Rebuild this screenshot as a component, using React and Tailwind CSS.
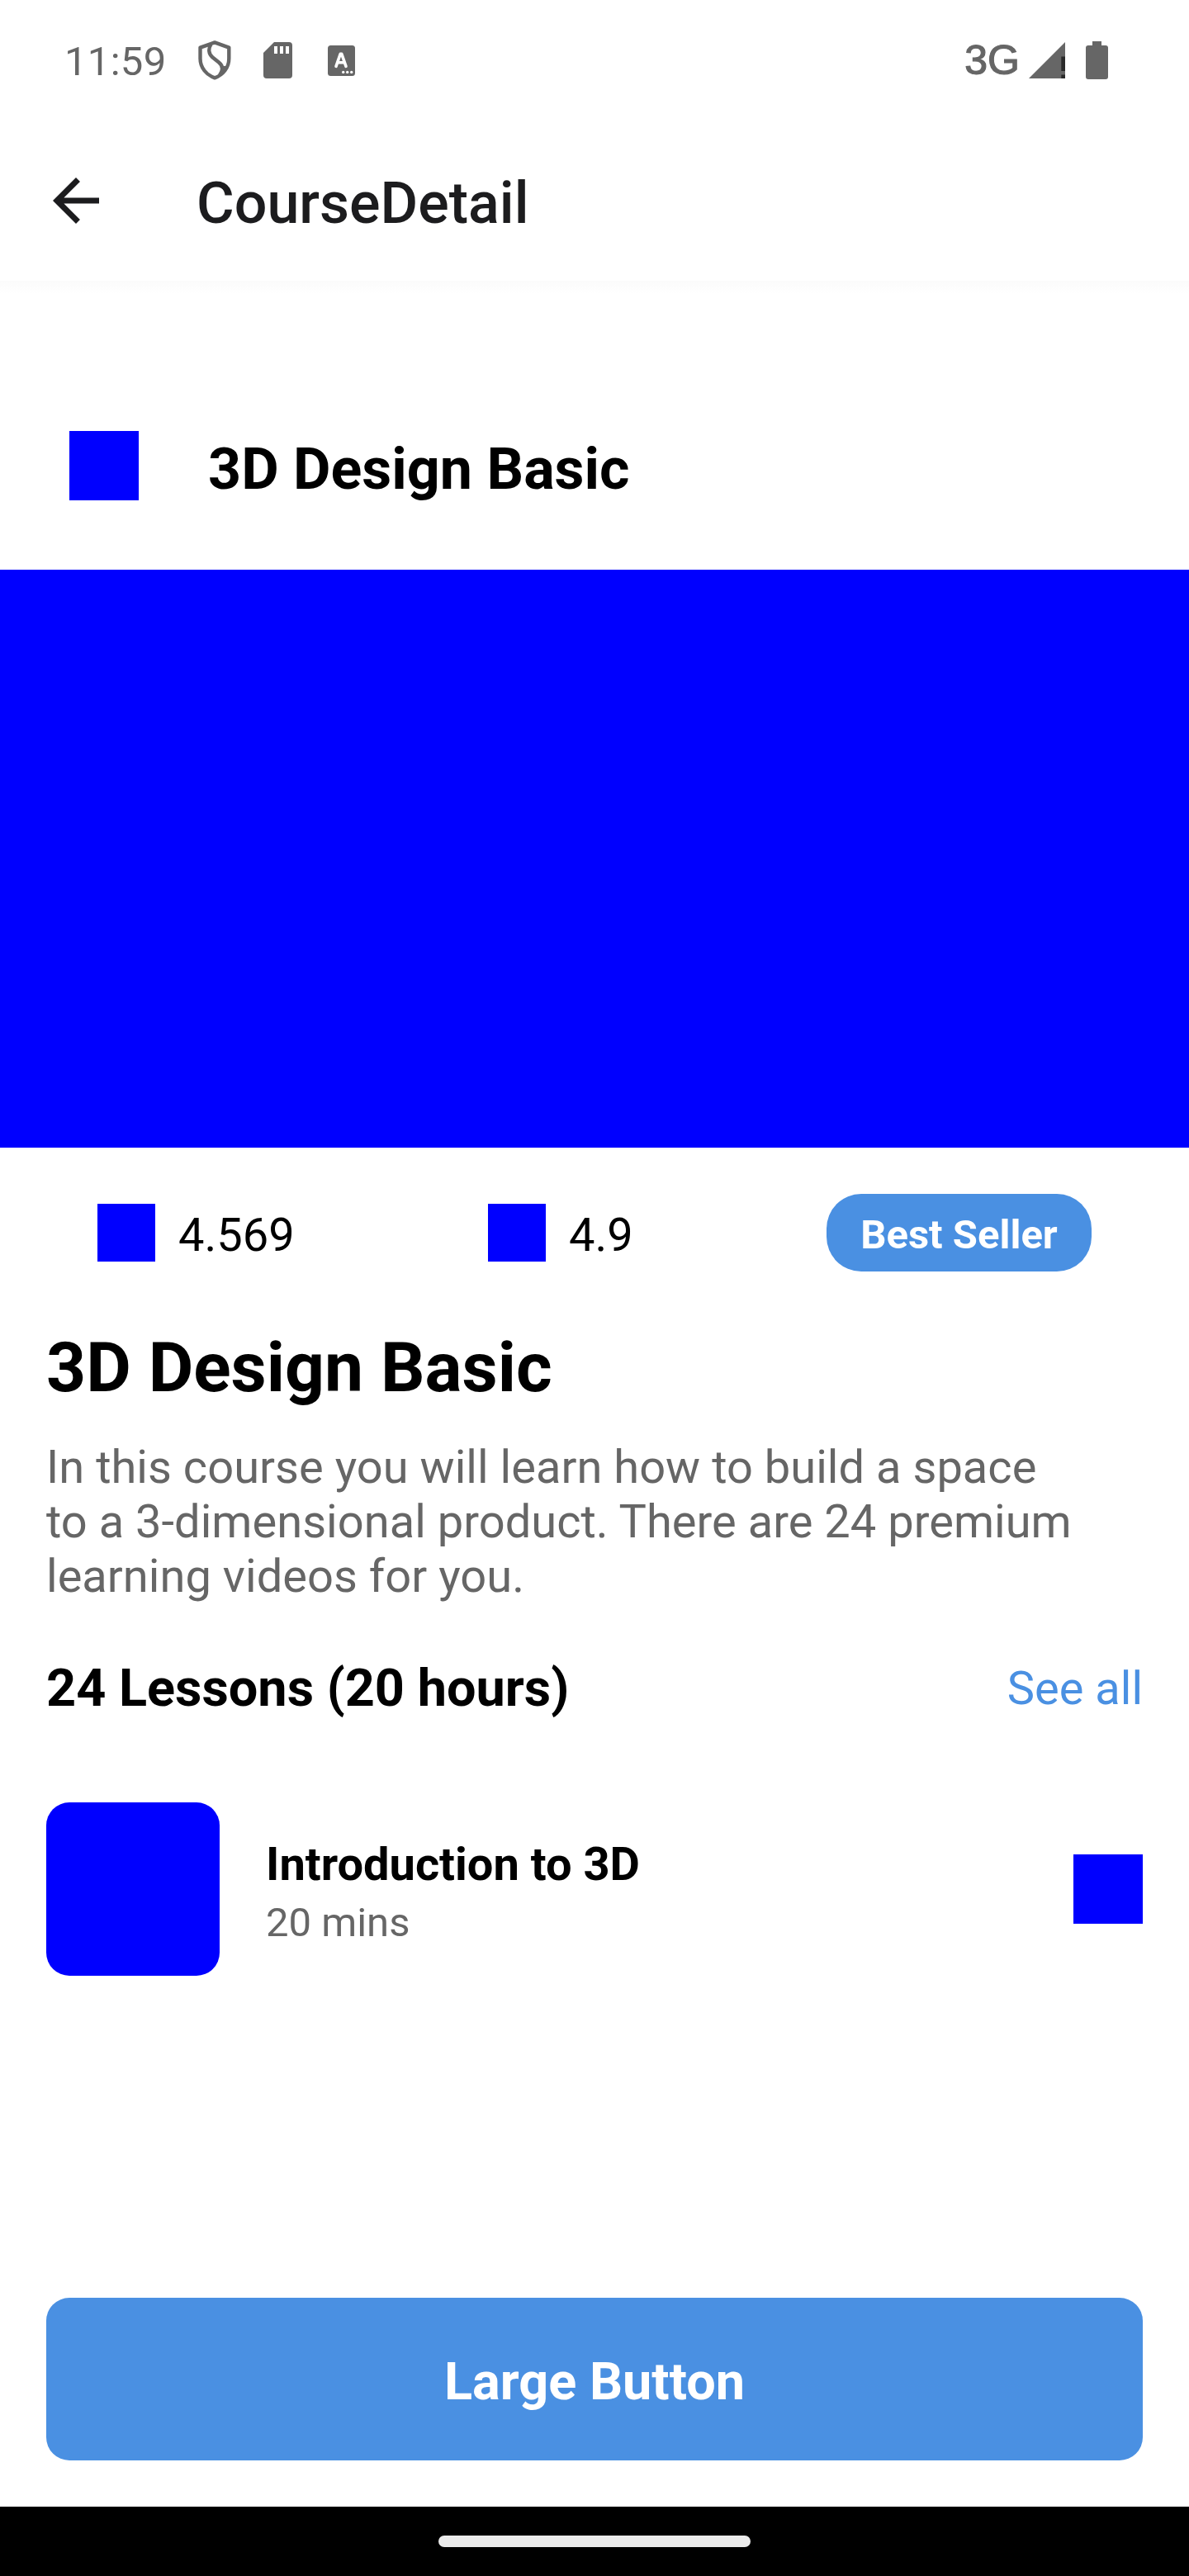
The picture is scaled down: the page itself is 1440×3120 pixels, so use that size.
function ShieldIcon() {
  return (
    <svg className="h-[48px] w-[40px]" viewBox="0 0 40 48" fill="none" stroke="#666666" strokeWidth="4.4" strokeLinejoin="round">
      <path d="M20 2.4 L37.3 8.6 V22 C37.3 33 30 41.8 20 45.4 C10 41.8 2.5 33 2.5 22 V8.6 Z" />
      <path d="M15.5 4.5 C12 10 12.5 16.5 17.5 20.5 L25 26.5 C30.5 31 30.5 36 26 42" />
      <path d="M34 31 L29 40 L26 42 L29 31 Z" fill="#666666" stroke="none" />
    </svg>
  );
}

function SdCardIcon() {
  return (
    <svg className="h-[44px] w-[35px]" viewBox="0 0 35 44">
      <path fill="#666666" d="M13 0 H31 a4 4 0 0 1 4 4 V40 a4 4 0 0 1-4 4 H4 a4 4 0 0 1-4-4 V13 Z" />
      <path fill="#ffffff" d="M13 5 h4 v9 h-4z M20 5 h4 v9 h-4z M27 5 h4 v9 h-4z" />
    </svg>
  );
}

function KeyboardBadge() {
  return (
    <svg className="h-[37px] w-[33px]" viewBox="0 0 33 37">
      <rect width="33" height="37" rx="3.5" fill="#666666" />
      <path d="M10 25.3 L15.2 10.3 H16.8 L22 25.3 M12 20.8 H20" fill="none" stroke="#ffffff" strokeWidth="3.6" strokeLinecap="round" strokeLinejoin="round" />
      <g fill="#ffffff">
        <circle cx="18.7" cy="32.4" r="1.7" />
        <circle cx="23.7" cy="32.4" r="1.7" />
        <circle cx="28.7" cy="32.4" r="1.7" />
      </g>
    </svg>
  );
}

function SignalIcon() {
  return (
    <svg className="h-[44px] w-[44px]" viewBox="0 0 44 44">
      <path fill="#666666" d="M44 0 V44 H0 Z" />
      <path fill="#2a2a2a" d="M39.3 17.5 H44 V35 H39.3 Z M39.3 39.5 H44 V44 H39.3 Z" />
    </svg>
  );
}

function BatteryIcon() {
  return (
    <svg className="h-[46px] w-[27px]" viewBox="0 0 27 46" fill="#666666">
      <rect x="8" width="11" height="8" />
      <rect y="5" width="27" height="41" rx="3" />
    </svg>
  );
}

function StatusBar() {
  return (
    <div className="flex h-[146px] items-center pr-[98px] pl-[78px] text-[#666666]">
      <span className="mt-[3px] w-[162px] text-[49px] leading-[60px] tracking-[0.3px]">11:59</span>
      <ShieldIcon />
      <div className="ml-[39px]"><SdCardIcon /></div>
      <div className="ml-[43px]"><KeyboardBadge /></div>
      <div className="ml-auto flex items-center">
        <span className="font-['Liberation_Sans',sans-serif] text-[50px] leading-[60px] [-webkit-text-stroke:1.2px_#666666]">3G</span>
        <div className="ml-[11px]"><SignalIcon /></div>
        <div className="-mt-[1px] ml-[25px]"><BatteryIcon /></div>
      </div>
    </div>
  );
}

function Header() {
  return (
    <header className="flex h-[194px] items-center pl-[50px] text-[#1c1c1e]">
      <svg className="h-[84px] w-[84px]" viewBox="0 0 24 24" fill="currentColor">
        <path d="M20 11H7.83l5.59-5.59L12 4l-8 8 8 8 1.41-1.41L7.83 13H20v-2z" />
      </svg>
      <h1 className="mt-[6px] ml-[104px] text-[70px] leading-[82px] font-medium">CourseDetail</h1>
    </header>
  );
}

function Stat({ value }) {
  return (
    <div className="flex items-center gap-[28px]">
      <div className="size-[70px] bg-[#0000ff]" />
      <span className="mt-[6px] text-[56px] leading-[66px]">{value}</span>
    </div>
  );
}

export default function App() {
  return (
    <div className="flex h-[3120px] w-[1440px] flex-col overflow-hidden bg-white font-[Roboto,sans-serif] text-black">
      <StatusBar />
      <Header />
      <div className="h-[16px] bg-linear-to-b from-[#fbfbfb] to-white" />
      <main className="flex flex-1 flex-col">
        <div className="mt-[124px] flex items-center gap-[84px] px-[84px] py-[42px]">
          <div className="size-[84px] bg-[#0000ff]" />
          <h2 className="mt-[4px] -mb-[4px] text-[70px] leading-[82px] font-bold">3D Design Basic</h2>
        </div>
        <div className="mt-[42px] h-[700px] shrink-0 bg-[#0000ff]" />
        <div className="mt-[56px] flex h-[94px] items-center pl-[118px]">
          <div className="w-[473px]"><Stat value="4.569" /></div>
          <div className="w-[410px]"><Stat value="4.9" /></div>
          <div className="flex h-[94px] w-[321px] items-center justify-center rounded-[42px] bg-[#4a90e2]">
            <span className="mt-[5px] text-[49px] leading-[58px] font-bold text-white">Best Seller</span>
          </div>
        </div>
        <section className="flex flex-1 flex-col px-[56px]">
          <h2 className="mt-[68px] -mb-[1px] text-[84px] leading-[98px] font-bold">3D Design Basic</h2>
          <p className="mt-[39px] text-[56px] leading-[66px] tracking-[0.03px] text-[#666666]">
            In this course you will learn how to build a space<br />
            to a 3-dimensional product. There are 24 premium<br />
            learning videos for you.
          </p>
          <div className="mt-[66px] flex items-center justify-between">
            <h3 className="text-[63px] leading-[74px] font-bold">24 Lessons (20 hours)</h3>
            <a className="text-[56px] leading-[66px] text-[#4a90e2]">See all</a>
          </div>
          <div className="mt-[101px] flex h-[210px] items-center">
            <div className="size-[210px] rounded-[28px] bg-[#0000ff]" />
            <div className="mt-[6px] ml-[56px] flex flex-col">
              <span className="text-[56px] leading-[66px] font-bold">Introduction to 3D</span>
              <span className="mt-[9px] -mb-[1px] text-[49px] leading-[58px] text-[#666666]">20 mins</span>
            </div>
            <div className="ml-auto size-[84px] bg-[#0000ff]" />
          </div>
          <button className="mt-auto mb-[56px] h-[197px] rounded-[28px] bg-[#4a90e2] pt-[6px] text-[63px] leading-[74px] font-bold text-white">
            Large Button
          </button>
        </section>
      </main>
      <div className="flex h-[84px] items-center justify-center bg-black">
        <div className="h-[14px] w-[378px] rounded-full bg-[#ebebeb]" />
      </div>
    </div>
  );
}
